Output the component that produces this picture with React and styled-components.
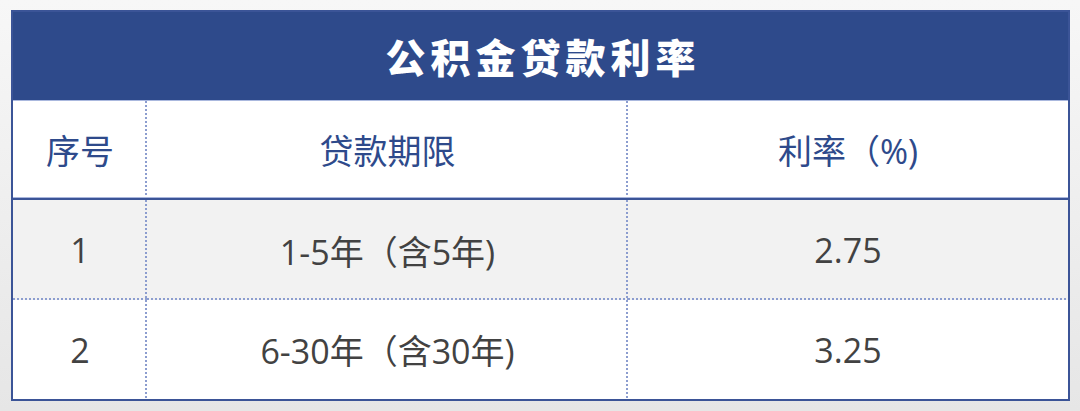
import React from 'react';
import styled, { createGlobalStyle } from 'styled-components';

const GlobalStyle = createGlobalStyle`
  html, body {
    margin: 0;
    padding: 0;
  }
  body {
    background: linear-gradient(to bottom, #f7f7f7, #e6e6e6);
    font-family: 'Open Sans', 'Noto Sans CJK SC', sans-serif;
  }
`;

const BLUE = '#2e4a8b';
const DOT = '#8c9dcf';

const rows = [
  { no: '1', term: '1-5年（含5年)', rate: '2.75' },
  { no: '2', term: '6-30年（含30年)', rate: '3.25' }
];

const Page = styled.div`
  width: 1080px;
  height: 411px;
  box-sizing: border-box;
  padding: 10px 10px 10px 11px;
`;

const Table = styled.div`
  box-sizing: border-box;
  width: 1059px;
  border: 2px solid #3b5497;
  background: #fff;
  display: grid;
  grid-template-columns: 134px 481px 1fr;
  grid-template-rows: 89px 99px 100px 99px;
`;

const Title = styled.div`
  grid-column: 1 / -1;
  background: ${BLUE};
  color: #fff;
  font-family: 'Noto Sans CJK SC', sans-serif;
  font-weight: 900;
  font-size: 40px;
  letter-spacing: 5px;
  padding-left: 5px;
  display: flex;
  align-items: center;
  justify-content: center;
  border-bottom: 1px solid #aab8de;
`;

const Cell = styled.div`
  display: flex;
  align-items: center;
  justify-content: center;
  font-size: 34px;
  color: ${({ $head }) => ($head ? BLUE : '#424242')};
  background-color: ${({ $shade }) => ($shade ? '#f2f2f2' : '#fff')};
  background-image: ${({ $right, $bottom }) =>
    [
      $right && `repeating-linear-gradient(to bottom, ${DOT} 0 2px, transparent 2px 4px)`,
      $bottom && `repeating-linear-gradient(to right, ${DOT} 0 2px, transparent 2px 4px)`
    ]
      .filter(Boolean)
      .join(', ') || 'none'};
  background-size: ${({ $right, $bottom }) =>
    [$right && '2px 100%', $bottom && '100% 2px'].filter(Boolean).join(', ') || 'auto'};
  background-position: ${({ $right, $bottom }) =>
    [$right && 'right top', $bottom && 'left bottom'].filter(Boolean).join(', ') || '0 0'};
  background-repeat: no-repeat;
  border-bottom: ${({ $solid }) => ($solid ? `2px solid #3b5497` : 'none')};
  box-shadow: ${({ $solid }) => ($solid ? 'inset 0 -1px 0 #a9b6dc' : 'none')};
`;

const App = () => (
  <>
    <GlobalStyle />
    <Page>
      <Table>
        <Title>公积金贷款利率</Title>
        <Cell $head $right $solid>序号</Cell>
        <Cell $head $right $solid>贷款期限</Cell>
        <Cell $head $solid>利率（%)</Cell>
        {rows.map((r, i) => {
          const last = i === rows.length - 1;
          return (
            <React.Fragment key={r.no}>
              <Cell $shade={i === 0} $right $bottom={!last}>{r.no}</Cell>
              <Cell $shade={i === 0} $right $bottom={!last}>{r.term}</Cell>
              <Cell $shade={i === 0} $bottom={!last}>{r.rate}</Cell>
            </React.Fragment>
          );
        })}
      </Table>
    </Page>
  </>
);

export default App;
